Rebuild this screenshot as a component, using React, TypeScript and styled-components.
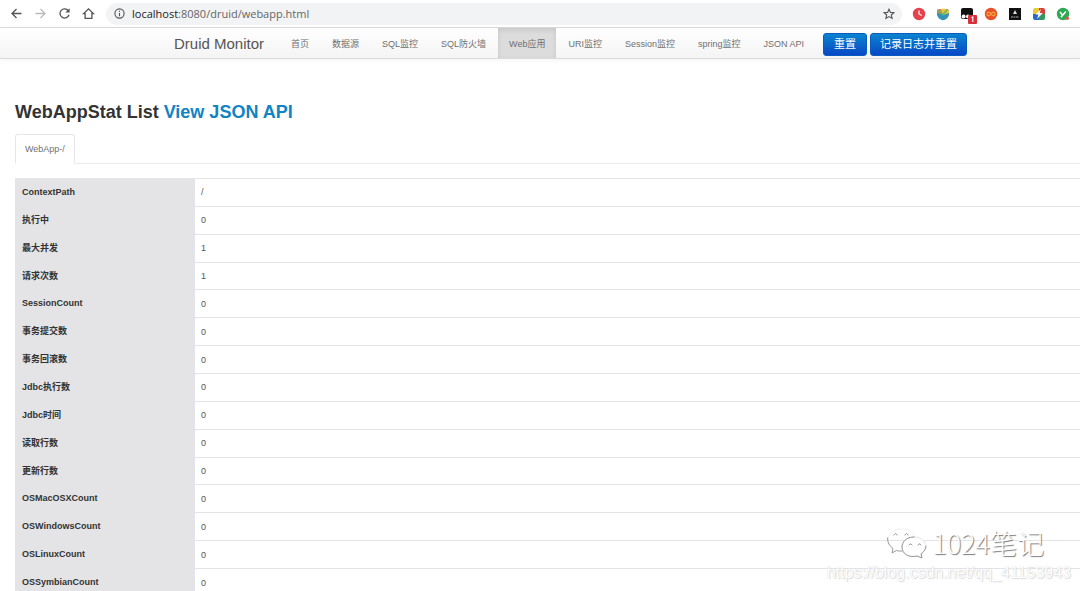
import React from "react";
import styled, { createGlobalStyle } from "styled-components";

const GlobalStyle = createGlobalStyle`
  * { box-sizing: border-box; }
  html, body, #root { height: 100%; }
  body {
    margin: 0;
    overflow: hidden;
    background: #fff;
    color: #333;
    font: 9px/20px "Liberation Sans", "Noto Sans CJK SC", sans-serif;
  }
`;

const Page = styled.div`
  position: relative;
  height: 100%;
  overflow: hidden;
`;

const BrowserBar = styled.div`
  display: flex;
  align-items: center;
  height: 28px;
  padding: 0 10px;
  border-bottom: 1px solid #dcdcdc;
`;

const BarButton = styled.button<{ $faded?: boolean }>`
  display: flex;
  flex: none;
  margin: 0;
  padding: 0;
  border: 0;
  background: none;
  color: ${(p) => (p.$faded ? "#bcbcbc" : "#555")};
`;

const Tools = styled.div`
  display: flex;
  gap: 11px;
`;

const AddressBox = styled.div`
  display: flex;
  flex: 1;
  align-items: center;
  height: 22px;
  margin-left: 11px;
  padding: 0 7px 0 8px;
  gap: 7px;
  border-radius: 11px;
  background: #f2f3f4;
  color: #555;
`;

const Address = styled.div`
  flex: 1;
  font: 11px/20px "Open Sans", sans-serif;
  color: #666;

  b {
    font-weight: 400;
    color: #222;
  }
`;

const Extensions = styled.div`
  display: flex;
  align-items: center;
  gap: 10px;
  margin-left: 10px;
`;

const NavBar = styled.header`
  display: flex;
  align-items: stretch;
  height: 31px;
  padding-left: 174px;
  border-bottom: 1px solid #dadada;
  background: linear-gradient(#fff, #f4f4f4);
  box-shadow: 0 1px 6px rgba(0, 0, 0, 0.05);
  white-space: nowrap;
`;

const Brand = styled.a`
  width: 106px;
  color: #555;
  font-size: 15px;
  line-height: 32px;
  text-decoration: none;
`;

const NavList = styled.nav`
  display: flex;
  gap: 1px;
`;

const NavLink = styled.a<{ $active?: boolean }>`
  padding: 0 11px;
  line-height: 32px;
  color: #6f6f6f;
  background: ${(p) => (p.$active ? "#dcdcdc" : "none")};
  box-shadow: ${(p) => (p.$active ? "inset 0 2px 5px rgba(0, 0, 0, 0.1)" : "none")};
  text-decoration: none;
`;

const Actions = styled.div`
  display: flex;
  align-items: center;
  gap: 3px;
  margin-left: 8px;
  padding-top: 2px;
`;

const PrimaryButton = styled.button`
  height: 23px;
  padding: 0 10px;
  border: 1px solid #0a5bc0;
  border-radius: 3px;
  background: linear-gradient(#0a84cf, #0848c6);
  color: #fff;
  font: 11px/20px "Liberation Sans", "Noto Sans CJK SC", sans-serif;

  & + & {
    padding: 0 9px;
  }
`;

const Content = styled.main`
  padding: 38px 0 0 15px;
`;

const Title = styled.h1`
  margin: 0;
  font-size: 18px;
  line-height: 30px;
`;

const TitleLink = styled.a`
  color: #1283c4;
  text-decoration: none;
`;

const Tabs = styled.div`
  display: flex;
  margin: 7px 0 14px;
  border-bottom: 1px solid #e8eaee;
`;

const Tab = styled.button`
  height: 30px;
  margin-bottom: -1px;
  padding: 0 9px;
  border: 1px solid #e4e6ea;
  border-bottom-color: #fff;
  border-radius: 3px 3px 0 0;
  background: #fff;
  color: #707070;
  font: 9px/20px "Liberation Sans", sans-serif;
`;

const StatTable = styled.table`
  width: 100%;
  height: 418px;
  border-collapse: separate;
  border-spacing: 0;
`;

const Label = styled.th`
  width: 179px;
  padding: 0 7px;
  background: #e4e4e6;
  text-align: left;
  font-weight: 700;
`;

const Value = styled.td`
  padding: 0 6px;
  border-top: 1px solid #e2e4e9;
  border-left: 1px solid #e2e4e9;
  color: #555;
`;

const Watermark = styled.div`
  position: absolute;
  right: 9px;
  bottom: 8px;
  display: flex;
  flex-direction: column;
  align-items: flex-end;
`;

const WatermarkName = styled.div`
  display: flex;
  align-items: center;
  gap: 4px;
  margin-right: 27px;
  margin-bottom: 3px;
  color: #fff;
  font: 300 27px/34px "Noto Sans CJK SC", sans-serif;
  text-shadow: 1px 1px 1px #777;
`;

const WatermarkUrl = styled.div`
  color: #fff;
  font-size: 16px;
  line-height: 20px;
  text-shadow: 0 0 1px #ccc, 1px 1px 1px #ddd;
`;

const stroke = { fill: "none", stroke: "currentColor", strokeWidth: 1.3 };

const BackIcon = () => (
  <svg width="13" height="13" viewBox="0 0 13 13" {...stroke}><path d="M11.5 6.5H2M6.5 2 2 6.5 6.5 11" /></svg>
);
const ForwardIcon = () => (
  <svg width="13" height="13" viewBox="0 0 13 13" {...stroke}><path d="M1.5 6.5H11M6.5 2 11 6.5 6.5 11" /></svg>
);
const ReloadIcon = () => (
  <svg width="13" height="13" viewBox="0 0 13 13" {...stroke}>
    <path d="M10.3 3.7A4.6 4.6 0 1 0 11 7.7" />
    <path d="M11.6 1.2v4.3H7.3z" fill="currentColor" stroke="none" />
  </svg>
);
const HomeIcon = () => (
  <svg width="13" height="13" viewBox="0 0 13 13" {...stroke}><path d="M1.5 6.7 6.5 1.9l5 4.800H9.900v4.700H3.100V6.700z" /></svg>
);
const InfoIcon = () => (
  <svg width="11" height="11" viewBox="0 0 11 11" fill="none" stroke="currentColor" strokeWidth="1.1">
    <circle cx="5.5" cy="5.5" r="4.6" /><path d="M5.5 5v3.2M5.5 2.7v1.2" />
  </svg>
);
const StarIcon = () => (
  <svg width="12" height="12" viewBox="0 0 12 12" fill="none" stroke="currentColor" strokeWidth="1.1">
    <path d="m6 1.2 1.4 3.2 3.5.3-2.6 2.3.8 3.4L6 8.6l-3.1 1.8.8-3.4L1.1 4.7l3.5-.3z" />
  </svg>
);

const ClockExt = () => (
  <svg width="14" height="14" viewBox="0 0 14 14">
    <circle cx="7" cy="7" r="6.2" fill="#e5424d" />
    <path d="M7 3.5V7l2.7 1.6" fill="none" stroke="#fff" strokeWidth="1.2" />
  </svg>
);
const ShieldExt = () => (
  <svg width="14" height="14" viewBox="0 0 14 14">
    <path d="M1 3c2-1.500 10-1.500 12 0v4c0 3.500-3 5.600-6 6.200C4 12.600 1 10.500 1 7z" fill="#3592b4" />
    <path d="M1 3c1-1 4-1.200 6-1v5L1 6z" fill="#e4803f" />
    <path d="M5 2c3-.5 7 0 8 1v3L7 8z" fill="#e9c63e" />
    <path d="m2 3.500 5 4 4.500-5" fill="none" stroke="#6fb26a" strokeWidth="1.800" />
  </svg>
);
const DarkExt = () => (
  <svg width="14" height="14" viewBox="0 0 14 14" overflow="visible">
    <rect x="1" y="1" width="12" height="11" rx="2" fill="#111" />
    <circle cx="3.600" cy="9.500" r="2" fill="#fff" /><circle cx="8" cy="9.500" r="2" fill="#fff" />
    <rect x="8" y="8" width="9" height="9" rx="1" fill="#d9303a" />
    <path d="M11.500 10.800 12.800 10v5" fill="none" stroke="#fff" strokeWidth="1.100" />
  </svg>
);
const InfinityExt = () => (
  <svg width="14" height="14" viewBox="0 0 14 14">
    <circle cx="7" cy="7" r="6.200" fill="#e6502b" />
    <path d="M7 7C5.500 4.500 3 4.800 3 7s2.500 2.500 4 0 4-2.200 4 0-2.500 2.500-4 0z" fill="none" stroke="#f7a13c" strokeWidth="1.300" />
  </svg>
);
const BlackExt = () => (
  <svg width="14" height="14" viewBox="0 0 14 14">
    <rect x="1" y="1" width="12" height="12" fill="#111" />
    <path d="m7 3 2 4H5z" fill="#ddd" /><path d="M3 10h8" stroke="#aaa" strokeDasharray="2 .5" />
  </svg>
);
const BoltExt = () => (
  <svg width="14" height="14" viewBox="0 0 14 14">
    <path d="M1 3a2 2 0 0 1 2-2h4v6H1z" fill="#eac934" /><path d="M7 1h4a2 2 0 0 1 2 2v4H7z" fill="#d93c3e" />
    <path d="M1 7h6v6H3a2 2 0 0 1-2-2z" fill="#2b67c5" /><path d="M7 7h6v4a2 2 0 0 1-2 2H7z" fill="#33985a" />
    <path d="M9 2 3.500 7.600h3L5 12l5.800-6H7.700z" fill="#fff" />
  </svg>
);
const GreenExt = () => (
  <svg width="14" height="14" viewBox="0 0 14 14">
    <circle cx="7" cy="7" r="6.200" fill="#2caa53" />
    <path d="m4 5 2.700 3.200M9.800 4.500 6.700 8.200 5 10.300" fill="none" stroke="#fff" strokeWidth="1.500" />
    <circle cx="11.300" cy="11.300" r="1.700" fill="#dc5547" />
  </svg>
);

const ChatLogo = () => (
  <svg width="42" height="34" viewBox="0 0 42 34" fill="none" strokeLinecap="round">
    <path d="M2 14C2 8 8 3 15 3c7 0 12 3 14 8" stroke="#f0f0f0" />
    <path d="M1.500 12c0 5 2 8 5.500 10.500L6 27l4.500-2.500c2 .6 3.500.800 5.500.500" stroke="#999" />
    <path d="M28 11c-8 0-12 5-12 10 0 7 7 11 15 9l5 2-1-4c8-6 5-17-7-17z" fill="#fff" stroke="#e4e4e4" />
    <path d="M28 11c-8 0-12 5-12 10 0 7 7 11 15 9l5 2-1-4c3-2 5-5 5-8" stroke="#999" />
    <path d="M8 9c1-2 2-2 3 0M19 9c1-2 2-2 3 0M23 19c1-1.500 2-1.500 3 0M32 19c1-1.500 2-1.500 3 0" stroke="#888" />
  </svg>
);

const navItems = ["首页", "数据源", "SQL监控", "SQL防火墙", "Web应用", "URI监控", "Session监控", "spring监控", "JSON API"];

const stats: [string, string][] = [
  ["ContextPath", "/"],
  ["执行中", "0"],
  ["最大并发", "1"],
  ["请求次数", "1"],
  ["SessionCount", "0"],
  ["事务提交数", "0"],
  ["事务回滚数", "0"],
  ["Jdbc执行数", "0"],
  ["Jdbc时间", "0"],
  ["读取行数", "0"],
  ["更新行数", "0"],
  ["OSMacOSXCount", "0"],
  ["OSWindowsCount", "0"],
  ["OSLinuxCount", "0"],
  ["OSSymbianCount", "0"],
];

export default function App() {
  return (
    <Page>
      <GlobalStyle />
      <BrowserBar>
        <Tools>
          <BarButton aria-label="Back"><BackIcon /></BarButton>
          <BarButton aria-label="Forward" $faded><ForwardIcon /></BarButton>
          <BarButton aria-label="Reload"><ReloadIcon /></BarButton>
          <BarButton aria-label="Home"><HomeIcon /></BarButton>
        </Tools>
        <AddressBox>
          <InfoIcon />
          <Address><b>localhost</b>:8080/druid/webapp.html</Address>
          <BarButton aria-label="Bookmark"><StarIcon /></BarButton>
        </AddressBox>
        <Extensions>
          <BarButton aria-label="Clock"><ClockExt /></BarButton>
          <BarButton aria-label="Shield"><ShieldExt /></BarButton>
          <BarButton aria-label="Scripts"><DarkExt /></BarButton>
          <BarButton aria-label="Infinity"><InfinityExt /></BarButton>
          <BarButton aria-label="Reader"><BlackExt /></BarButton>
          <BarButton aria-label="Bolt"><BoltExt /></BarButton>
          <BarButton aria-label="Green"><GreenExt /></BarButton>
        </Extensions>
      </BrowserBar>
      <NavBar>
        <Brand href="#">Druid Monitor</Brand>
        <NavList>
          {navItems.map((item) => (
            <NavLink key={item} href="#" $active={item === "Web应用"}>{item}</NavLink>
          ))}
        </NavList>
        <Actions>
          <PrimaryButton>重置</PrimaryButton>
          <PrimaryButton>记录日志并重置</PrimaryButton>
        </Actions>
      </NavBar>
      <Content>
        <Title>WebAppStat List <TitleLink href="#">View JSON API</TitleLink></Title>
        <Tabs><Tab>WebApp-/</Tab></Tabs>
        <StatTable>
          <tbody>
            {stats.map(([label, value]) => (
              <tr key={label}>
                <Label scope="row">{label}</Label>
                <Value>{value}</Value>
              </tr>
            ))}
          </tbody>
        </StatTable>
      </Content>
      <Watermark>
        <WatermarkName><ChatLogo />1024笔记</WatermarkName>
        <WatermarkUrl>https://blog.csdn.net/qq_41153943</WatermarkUrl>
      </Watermark>
    </Page>
  );
}
